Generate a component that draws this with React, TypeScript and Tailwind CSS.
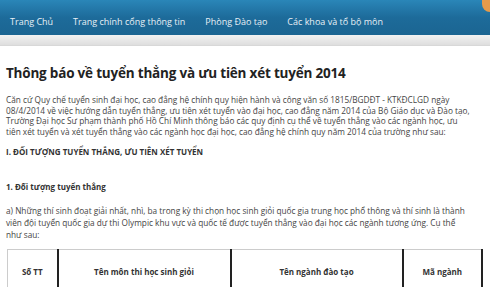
import React from "react";

const navItems = ["Trang Chủ", "Trang chính cổng thông tin", "Phòng Đào tạo", "Các khoa và tổ bộ môn"];

const introLines = [
  "Căn cứ Quy chế tuyển sinh đại học, cao đẳng hệ chính quy hiện hành và công văn số 1815/BGDĐT - KTKĐCLGD ngày",
  "08/4/2014 về việc hướng dẫn tuyển thẳng, ưu tiên xét tuyển vào đại học, cao đẳng năm 2014 của Bộ Giáo dục và Đào tạo,",
  "Trường Đại học Sư phạm thành phố Hồ Chí Minh thông báo các quy định cụ thể về tuyển thẳng vào các ngành học, ưu",
  "tiên xét tuyển và xét tuyển thẳng vào các ngành học đại học, cao đẳng hệ chính quy năm 2014 của trường như sau:",
];

const aLines = [
  "a) Những thí sinh đoạt giải nhất, nhì, ba trong kỳ thi chọn học sinh giỏi quốc gia trung học phổ thông và thí sinh là thành",
  "viên đội tuyển quốc gia dự thi Olympic khu vực và quốc tế được tuyển thẳng vào đại học các ngành tương ứng. Cụ thể",
  "như sau:",
];

export default function App() {
  return (
    <div className="relative h-[287px] w-[490px] overflow-hidden bg-white font-['Open_Sans',sans-serif] text-[#444]">
      {/* top navigation */}
      <div className="h-[35px] bg-gradient-to-b from-[#2a86b8] via-[#1d6b9a] to-[#1b6592]">
        <ul className="flex h-full items-center gap-[20px] pl-[10px] pt-[9px] text-[9px] text-[#e8f0f6]">
          {navItems.map((item) => (
            <li key={item}>{item}</li>
          ))}
        </ul>
      </div>
      <div className="absolute right-0 top-0 h-[12px] w-[8px] rounded-bl-full bg-[#e59a4a]" />
      <div className="h-[11px] border-b border-[#d8d8d8] bg-gradient-to-b from-[#f2f2f2] to-[#dedede]" />

      <div className="px-[6px]">
        <h1 className="mt-[17px] text-[13.5px] font-bold leading-[20px] tracking-[-0.2px] text-[#222]">
          Thông báo về tuyển thẳng và ưu tiên xét tuyển 2014
        </h1>

        <div className="mt-[12px] text-[8.25px] leading-[10.5px]">
          {introLines.map((line) => (
            <div key={line} className="whitespace-nowrap">
              {line}
            </div>
          ))}
        </div>

        <p className="mt-[10px] text-[8px] font-bold leading-[10px] text-[#333]">
          I. ĐỐI TƯỢNG TUYỂN THẲNG, ƯU TIÊN XÉT TUYỂN
        </p>

        <p className="mt-[25px] text-[8px] font-bold leading-[10px] text-[#333]">1. Đối tượng tuyển thẳng</p>

        <div className="mt-[13px] text-[8.25px] leading-[12px]">
          {aLines.map((line) => (
            <div key={line} className="whitespace-nowrap">
              {line}
            </div>
          ))}
        </div>

        <table className="mt-[8px] ml-[1px] w-[476px] border-collapse text-[8px] font-bold text-[#333]">
          <thead>
            <tr className="h-[44px]">
              <th className="w-[50px] border border-[#ccc] border-r-2 border-r-[#222]">Số TT</th>
              <th className="w-[173px] border border-[#ccc] border-r-2 border-r-[#222]">Tên môn thi học sinh giỏi</th>
              <th className="w-[172px] border border-[#ccc] border-r-2 border-r-[#222]">Tên ngành đào tạo</th>
              <th className="border border-[#ccc] border-r-2 border-r-[#222]">Mã ngành</th>
            </tr>
          </thead>
        </table>
      </div>
    </div>
  );
}
